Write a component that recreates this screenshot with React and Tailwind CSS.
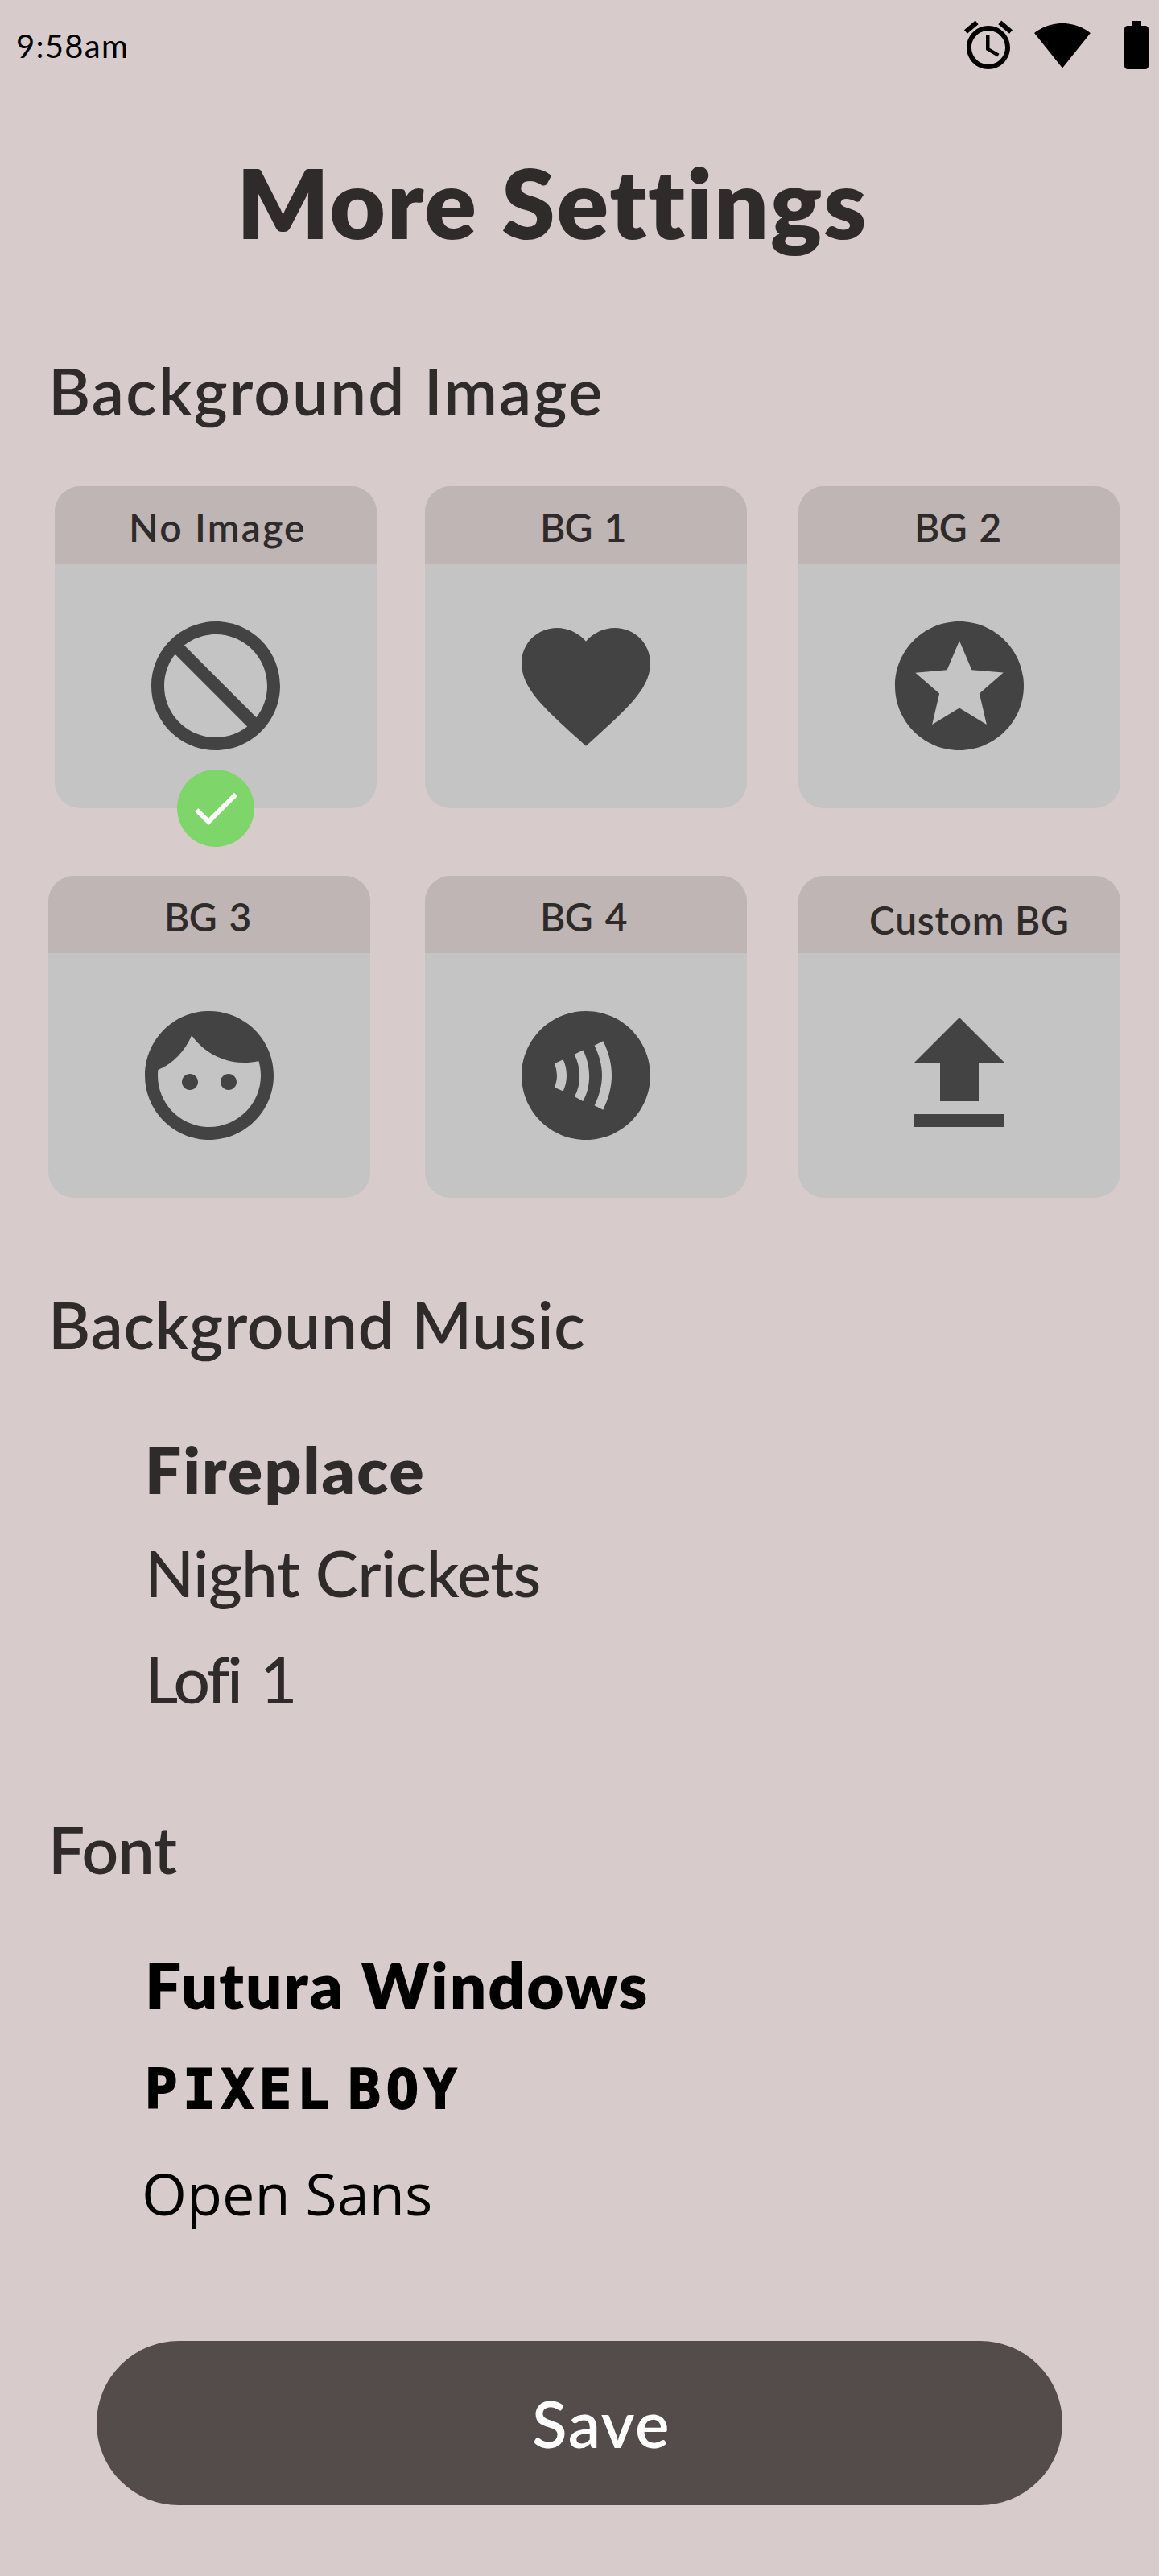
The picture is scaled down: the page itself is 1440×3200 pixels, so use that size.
import { MdContactless } from "react-icons/md";

function Icon({ d, className }) {
  return (
    <svg viewBox="0 0 24 24" fill="currentColor" className={className}>
      <path d={d} />
    </svg>
  );
}

const icons = {
  alarm:
    "M22 5.72l-4.6-3.86-1.29 1.53 4.6 3.86L22 5.72zM7.88 3.39L6.6 1.86 2 5.71l1.29 1.53 4.59-3.85zM12.5 8H11v6l4.75 2.85.75-1.23-4-2.37V8zM12 4c-4.97 0-9 4.03-9 9s4.02 9 9 9c4.97 0 9-4.03 9-9s-4.03-9-9-9zm0 16c-3.87 0-7-3.13-7-7s3.13-7 7-7 7 3.13 7 7-3.13 7-7 7z",
  wifi: "M12.01 21.49L23.64 7c-.45-.34-4.93-4-11.64-4C5.28 3 .81 6.66.36 7l11.63 14.49.01.01.01-.01z",
  battery:
    "M15.67 4H14V2h-4v2H8.33C7.6 4 7 4.6 7 5.33v15.33C7 21.4 7.6 22 8.33 22h7.33c.74 0 1.34-.6 1.34-1.33V5.33C17 4.6 16.4 4 15.67 4z",
  check: "M9 16.2L4.8 12l-1.4 1.4L9 19 21 7l-1.4-1.4L9 16.2z",
  block:
    "M12 2C6.48 2 2 6.48 2 12s4.48 10 10 10 10-4.48 10-10S17.52 2 12 2zm0 18c-4.42 0-8-3.58-8-8 0-1.85.63-3.55 1.69-4.9L16.9 18.31C15.55 19.37 13.85 20 12 20zm6.31-3.1L7.1 5.69C8.45 4.63 10.15 4 12 4c4.42 0 8 3.58 8 8 0 1.85-.63 3.55-1.69 4.9z",
  heart:
    "M12 21.35l-1.45-1.32C5.4 15.36 2 12.28 2 8.5 2 5.42 4.42 3 7.5 3c1.74 0 3.41.81 4.5 2.09C13.09 3.81 14.76 3 16.5 3 19.58 3 22 5.42 22 8.5c0 3.78-3.4 6.86-8.55 11.54L12 21.35z",
  star: "M11.99 2C6.47 2 2 6.48 2 12s4.47 10 9.99 10C17.52 22 22 17.52 22 12S17.52 2 11.99 2zm4.24 16L12 15.45 7.77 18l1.12-4.81-3.73-3.23 4.92-.42L12 5l1.92 4.53 4.92.42-3.73 3.23L16.23 18z",
  face: "M9 11.75c-.69 0-1.25.56-1.25 1.25s.56 1.25 1.25 1.25 1.25-.56 1.25-1.25-.56-1.25-1.25-1.25zm6 0c-.69 0-1.25.56-1.25 1.25s.56 1.25 1.25 1.25 1.25-.56 1.25-1.25-.56-1.25-1.25-1.25zM12 2C6.48 2 2 6.48 2 12s4.48 10 10 10 10-4.48 10-10S17.52 2 12 2zm0 18c-4.41 0-8-3.59-8-8 0-.29.02-.58.05-.86 2.36-1.05 4.23-2.98 5.21-5.37C11.07 8.33 14.05 10 17.42 10c.78 0 1.53-.09 2.25-.26.21.71.33 1.47.33 2.26 0 4.41-3.59 8-8 8z",
  upload: "M9 16h6v-6h4l-7-7-7 7h4v6zm-4 2h14v2H5v-2z",
};

function Card({ label, labelClass, selected, className = "", children }) {
  return (
    <div className={`relative h-[400px] w-[400px] shrink-0 ${className}`}>
      <div className="flex h-full flex-col overflow-hidden rounded-[32px] bg-[#c4c4c4]">
        <div className="h-24 bg-[#bfb5b4] pt-1">
          <p className={`text-[48px] leading-[93px] font-semibold whitespace-nowrap ${labelClass}`}>{label}</p>
        </div>
        <div className="flex flex-1 items-center justify-center text-[#434343]">{children}</div>
      </div>
      {selected && (
        <div className="absolute bottom-[-48px] left-[152px] flex size-24 items-center justify-center rounded-full bg-[#7ed56a] text-white">
          <Icon d={icons.check} className="size-[72px]" />
        </div>
      )}
    </div>
  );
}

export default function App() {
  return (
    <main className="flex h-[3200px] w-[1440px] flex-col overflow-hidden bg-[#d7cbcb] font-['Lato',sans-serif] text-[#2f2b2a]">
      <header className="flex h-28 items-start justify-between pl-5 text-black">
        <p className="mt-[33px] text-[40px] leading-[48px] tracking-[1.3px]">9:58am</p>
        <div className="mt-5 mr-[-8px] flex gap-5">
          <Icon d={icons.alarm} className="size-[72px]" />
          <Icon d={icons.wifi} className="size-[72px]" />
          <Icon d={icons.battery} className="size-[72px]" />
        </div>
      </header>

      <h1 className="mt-[67px] ml-[294px] text-[120px] leading-[144px] font-extrabold tracking-[1.8px] whitespace-nowrap">
        More Settings
      </h1>

      <h2 className="mt-[114px] ml-[60px] text-[80px] leading-24 font-semibold tracking-[2.2px]">Background Image</h2>
      <section className="mt-[71px] flex flex-col gap-[84px]">
        <div className="flex pl-[68px]">
          <Card label="No Image" labelClass="pl-[92px] tracking-[2.2px]" selected>
            <Icon d={icons.block} className="size-48" />
          </Card>
          <Card label="BG 1" labelClass="pl-[143px] tracking-[-0.8px] [word-spacing:4px]" className="ml-[60px]">
            <Icon d={icons.heart} className="size-48" />
          </Card>
          <Card label="BG 2" labelClass="pl-[144px] tracking-[-0.6px] [word-spacing:4px]" className="ml-16">
            <Icon d={icons.star} className="size-48" />
          </Card>
        </div>
        <div className="flex pl-[60px]">
          <Card label="BG 3" labelClass="pl-[144px] tracking-[-0.6px] [word-spacing:4px]">
            <Icon d={icons.face} className="size-48" />
          </Card>
          <Card label="BG 4" labelClass="pl-[143px] tracking-[-0.5px] [word-spacing:4px]" className="ml-[68px]">
            <MdContactless className="size-48" />
          </Card>
          <Card label="Custom BG" labelClass="pt-1 pl-[88px] tracking-[0.7px]" className="ml-16">
            <Icon d={icons.upload} className="size-48" />
          </Card>
        </div>
      </section>

      <h2 className="mt-[109px] ml-[60px] text-[80px] leading-24 font-semibold tracking-[0.8px]">Background Music</h2>
      <ul className="mt-[84px] flex flex-col pl-[180px] text-[80px] leading-24">
        <li className="font-extrabold tracking-[2.2px]">Fireplace</li>
        <li className="mt-8 font-medium tracking-[-0.6px]">Night Crickets</li>
        <li className="mt-9 font-medium tracking-[-3px] [word-spacing:7px]">Lofi 1</li>
      </ul>

      <h2 className="mt-[116px] ml-[60px] text-[80px] leading-24 font-semibold tracking-[-0.3px]">Font</h2>
      <ul className="mt-[72px] flex flex-col text-black">
        <li className="pl-[180px] text-[80px] leading-24 font-extrabold tracking-[2px]">Futura Windows</li>
        <li className="mt-[35px] pl-[180px] font-['DejaVu_Sans_Mono',monospace] text-[67px] leading-24 font-bold tracking-[6.9px] [-webkit-text-stroke:2px_black] [word-spacing:-31px]">
          PIXEL BOY
        </li>
        <li className="mt-8 pl-[176px] font-['Open_Sans',sans-serif] text-[72px] leading-24">Open Sans</li>
      </ul>

      <button className="mt-[136px] ml-[120px] h-[204px] w-[1200px] rounded-[102px] bg-[#534c4b] pl-[541px] text-left text-[80px] leading-[200px] font-semibold tracking-[1.7px] text-white">
        Save
      </button>
    </main>
  );
}
